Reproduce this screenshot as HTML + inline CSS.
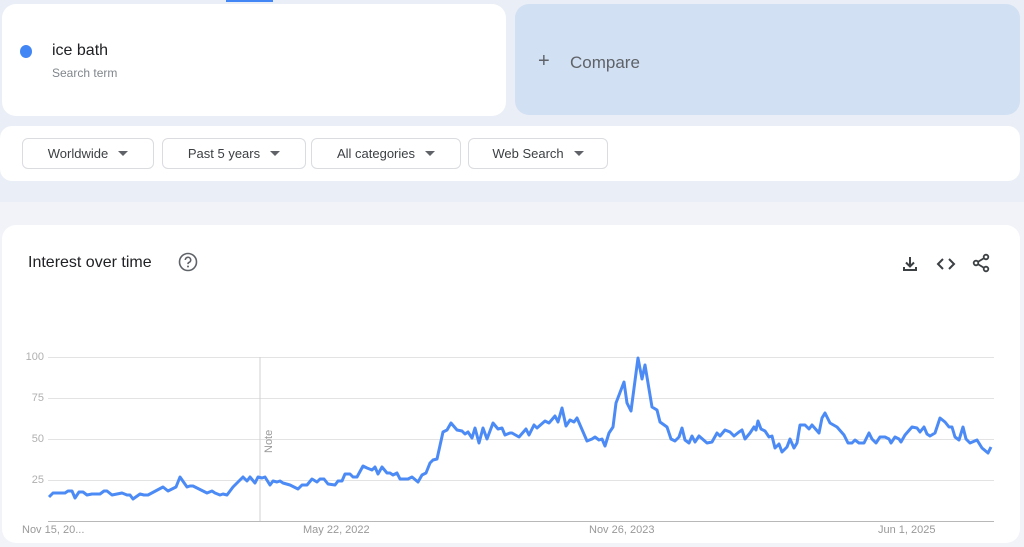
<!DOCTYPE html>
<html><head><meta charset="utf-8"><style>
*{box-sizing:border-box;margin:0;padding:0}
body{width:1024px;height:547px;overflow:hidden;background:#eaeef6;font-family:"Liberation Sans",sans-serif;position:relative}
.abs{position:absolute}
.card{background:#fff;border-radius:14px}
.btn{position:absolute;top:138px;height:31px;border:1px solid #dadce0;border-radius:6px;background:#fff;font-size:13px;color:#3c4043;display:flex;align-items:center;justify-content:center;gap:10px}
.tri{width:0;height:0;border-left:5px solid transparent;border-right:5px solid transparent;border-top:5px solid #5f6368}
.yl{position:absolute;left:24px;width:20px;text-align:right;font-size:11px;color:#b0b0b0}
.xl{position:absolute;top:524px;font-size:11px;color:#999}
</style></head><body>
<div class="abs" style="left:0;top:202px;width:1024px;height:345px;background:#f1f3f8"></div>
<div class="abs" style="left:226px;top:0;width:47px;height:2px;background:#4285f4"></div>
<div class="abs card" style="left:2px;top:4px;width:504px;height:112px"></div>
<div class="abs" style="left:20px;top:45px;width:12px;height:13px;border-radius:50%;background:#4285f4"></div>
<div class="abs" style="left:52px;top:42px;font-size:16px;color:#202124">ice bath</div>
<div class="abs" style="left:52px;top:66px;font-size:12px;color:#80868b">Search term</div>
<div class="abs" style="left:515px;top:4px;width:505px;height:111px;background:#d2e0f3;border-radius:14px"></div>
<div class="abs" style="left:538px;top:50px;font-size:20px;color:#5f6368;font-weight:300">+</div>
<div class="abs" style="left:570px;top:53px;font-size:17px;color:#5f6368">Compare</div>
<div class="abs card" style="left:0;top:126px;width:1020px;height:55px;border-radius:12px"></div>
<div class="btn" style="left:22px;width:132px">Worldwide <span class="tri"></span></div>
<div class="btn" style="left:162px;width:144px">Past 5 years <span class="tri"></span></div>
<div class="btn" style="left:311px;width:150px">All categories <span class="tri"></span></div>
<div class="btn" style="left:468px;width:140px;top:138px">Web Search <span class="tri"></span></div>
<div class="abs card" style="left:2px;top:225px;width:1018px;height:318px"></div>
<div class="abs" style="left:28px;top:254px;font-size:16px;color:#202124">Interest over time</div>
<svg class="abs" style="left:178px;top:252px" width="20" height="20" viewBox="0 0 20 20"><circle cx="10" cy="10" r="8.5" fill="none" stroke="#5f6368" stroke-width="1.6"/><path d="M7.3 8a2.7 2.7 0 1 1 3.6 2.5c-.7.3-.9.8-.9 1.6" fill="none" stroke="#5f6368" stroke-width="1.6"/><circle cx="10" cy="14.5" r="1" fill="#5f6368"/></svg>
<svg class="abs" style="left:900px;top:254px" width="20" height="20" viewBox="0 0 20 20"><path d="M10 3v9M6 8.5l4 4 4-4M4 13v3h12v-3" fill="none" stroke="#3c4043" stroke-width="2"/></svg>
<svg class="abs" style="left:935px;top:254px" width="22" height="20" viewBox="0 0 22 20"><path d="M8 5l-5 5 5 5M14 5l5 5-5 5" fill="none" stroke="#3c4043" stroke-width="2"/></svg>
<svg class="abs" style="left:970px;top:252px" width="22" height="22" viewBox="0 0 22 22"><path d="M16 5L6 11l10 6" fill="none" stroke="#3c4043" stroke-width="1.8"/><circle cx="16" cy="5" r="2.3" fill="#fff" stroke="#3c4043" stroke-width="1.8"/><circle cx="6" cy="11" r="2.3" fill="#fff" stroke="#3c4043" stroke-width="1.8"/><circle cx="16" cy="17" r="2.3" fill="#fff" stroke="#3c4043" stroke-width="1.8"/></svg>
<svg class="abs" style="left:0;top:0" width="1024" height="547">
<g stroke="#e3e3e3" stroke-width="1"><line x1="48" y1="357.5" x2="994" y2="357.5"/><line x1="48" y1="398.5" x2="994" y2="398.5"/><line x1="48" y1="439.5" x2="994" y2="439.5"/><line x1="48" y1="480.5" x2="994" y2="480.5"/></g>
<line x1="48" y1="521.5" x2="994" y2="521.5" stroke="#b8b8b8"/>
<line x1="260" y1="357" x2="260" y2="521" stroke="#d0d0d0"/>
<text x="0" y="0" transform="translate(272,453) rotate(-90)" font-family="Liberation Sans" font-size="11" fill="#999">Note</text>
<polyline fill="none" stroke="#4c8bf5" stroke-width="3" stroke-linejoin="round" points="49,497 53,493 65,493 68,491 72,491 75,498 79,492 83,492 87,495 92,494 100,494 104,491 107,491 112,495 122,493 127,495 130,495 133,499 140,494 144,495 148,495 163,487 168,491 176,487 180,477 187,487 190,486 193,486 207,493 212,491 215,493 220,495 223,494 227,495 233,487 243,477 247,481 250,477 255,483 258,477 262,478 265,477 270,485 273,481 277,482 280,481 283,483 290,485 298,489 302,485 307,485 312,479 317,482 320,479 324,479 328,484 335,485 338,481 342,481 345,474 350,474 353,477 357,477 363,466 367,468 372,470 375,467 378,474 382,467 387,473 390,473 393,475 397,473 400,479 408,479 412,477 418,482 422,475 426,473 430,463 433,460 437,459 443,432 447,430 451,423 457,430 462,431 465,434 468,432 472,438 475,428 479,443 483,428 487,439 493,423 498,429 502,428 505,435 510,433 512,433 519,437 526,429 529,435 534,425 537,428 545,421 549,423 555,416 558,422 562,408 566,426 570,420 574,422 577,418 587,441 592,439 595,437 599,440 602,439 605,446 609,433 613,427 616,403 624,382 627,403 631,411 638,358 642,379 645,365 652,407 657,410 660,422 667,427 671,439 675,441 679,437 682,428 685,440 689,443 692,436 695,442 699,436 707,443 712,442 717,433 720,436 725,430 730,432 734,436 739,432 742,430 745,439 750,433 754,427 756,430 758,421 761,429 765,431 769,437 772,436 775,448 779,444 782,452 787,447 790,439 794,448 797,443 800,425 805,425 809,429 812,425 819,433 822,418 825,413 830,423 837,427 844,435 848,443 852,443 855,440 859,443 864,443 869,433 872,439 876,443 880,437 885,437 889,439 891,443 895,437 899,439 901,442 905,435 912,427 917,428 920,432 924,427 927,434 930,436 935,433 940,418 945,422 949,427 952,427 955,437 959,440 963,427 966,439 970,443 977,440 982,448 988,453 991,447"/>
</svg>
<div class="yl" style="top:351px">100</div>
<div class="yl" style="top:392px">75</div>
<div class="yl" style="top:433px">50</div>
<div class="yl" style="top:474px">25</div>
<div class="xl" style="left:22px">Nov 15, 20...</div>
<div class="xl" style="left:303px">May 22, 2022</div>
<div class="xl" style="left:589px">Nov 26, 2023</div>
<div class="xl" style="left:878px">Jun 1, 2025</div>
</body></html>
